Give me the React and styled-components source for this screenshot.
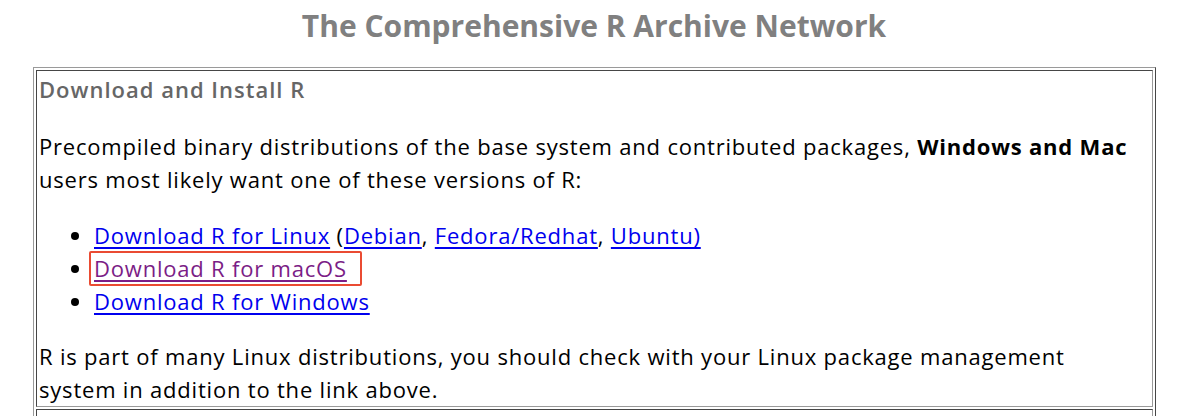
import React from "react";
import styled, { createGlobalStyle } from "styled-components";

const GlobalStyle = createGlobalStyle`
  body {
    margin: 0;
    background: #fff;
    font-family: "Open Sans", "Liberation Sans", sans-serif;
    color: #000;
  }
`;

const Page = styled.div`
  width: 1200px;
  height: 416px;
  overflow: hidden;
`;

const Title = styled.h1`
  margin: 8px 0 0;
  padding-right: 12px;
  height: 59px;
  text-align: center;
  font-size: 30px;
  line-height: 36px;
  font-weight: 700;
  color: #808080;
`;

const Frame = styled.table`
  margin: 0 0 0 33px;
  width: 1123px;
  border: 1px outset #9a9a9a;
  border-spacing: 2px;
  border-collapse: separate;
`;

const Cell = styled.td`
  border: 1px inset #9a9a9a;
  padding: 0 2px;
  font-size: 22px;
  line-height: 33px;
  letter-spacing: 0.8px;
`;

const Heading = styled.h3`
  margin: 2px 0 0;
  font-size: 22px;
  line-height: 33px;
  font-weight: 600;
  letter-spacing: 1px;
  color: #666;
`;

const Para = styled.p`
  margin: ${(p) => p.$top || 22}px 0 0;
  max-width: 1102px;
`;

const List = styled.ul`
  margin: 23px 0 0;
  padding-left: 55px;
  list-style: disc;
`;

const Item = styled.li`
  line-height: 33px;
`;

const Link = styled.a`
  color: ${(p) => (p.$visited ? "#7b1d86" : "#0000ee")};
  text-decoration: underline;
  text-underline-offset: 3px;
`;

const Marked = styled.span`
  margin-left: -5px;
  padding: 0 13px 1px 3px;
  border: 2px solid #ea4b32;
  border-radius: 2px;
`;

export default function App() {
  return (
    <Page>
      <GlobalStyle />
      <Title>The Comprehensive R Archive Network</Title>
      <Frame>
        <tbody>
          <tr>
            <Cell>
              <Heading>Download and Install R</Heading>
              <Para $top={24}>
                Precompiled binary distributions of the base system and
                contributed packages, <b>Windows and Mac</b> users most likely
                want one of these versions of R:
              </Para>
              <List>
                <Item>
                  <Link href="#">Download R for Linux</Link> (
                  <Link href="#">Debian</Link>,{" "}
                  <Link href="#">Fedora/Redhat</Link>,{" "}
                  <Link href="#">Ubuntu)</Link>
                </Item>
                <Item>
                  <Marked>
                    <Link href="#" $visited>
                      Download R for macOS
                    </Link>
                  </Marked>
                </Item>
                <Item>
                  <Link href="#">Download R for Windows</Link>
                </Item>
              </List>
              <Para>
                R is part of many Linux distributions, you should check with
                your Linux package management system in addition to the link
                above.
              </Para>
            </Cell>
          </tr>
          <tr>
            <Cell>&nbsp;</Cell>
          </tr>
        </tbody>
      </Frame>
    </Page>
  );
}
